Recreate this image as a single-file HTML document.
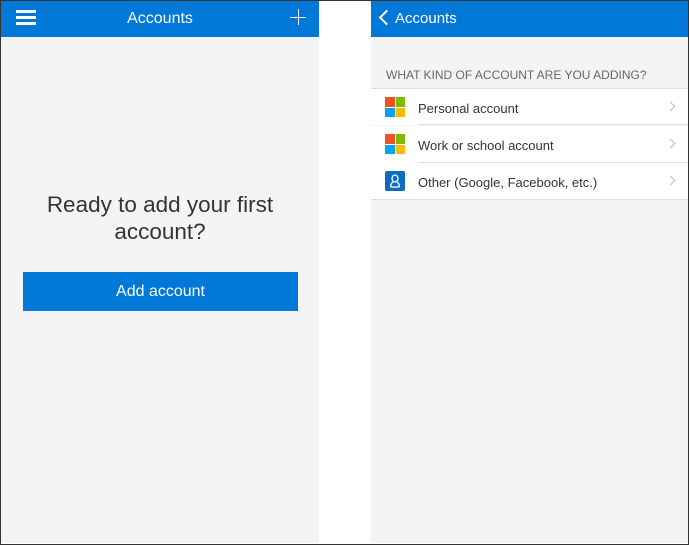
<!DOCTYPE html>
<html><head><style>
*{margin:0;padding:0;box-sizing:border-box}
body{width:689px;height:545px;background:#fff;font-family:"Liberation Sans",sans-serif;position:relative;overflow:hidden}
.frame{position:absolute;left:0;top:0;width:689px;height:545px;border:1px solid #333;}
.p{position:absolute;top:1px;height:542px;background:#f4f4f4}
.hd{position:absolute;left:0;top:0;right:0;height:36px;background:#0078d7;color:#fff}
.row{position:absolute;left:0;right:0;height:37px;background:#fff;font-size:13px;color:#333}
.row span{position:absolute;left:47px;top:12px}
.sep{position:absolute;left:47px;right:0;bottom:0;height:1px;background:#ddd}
.chev{position:absolute;right:14px;top:14px;width:7px;height:7px;border-right:1px solid #bbb;border-top:1px solid #bbb;transform:rotate(45deg)}
.ms{position:absolute;left:14px;top:8px;width:20px;height:20px}
.ms i{position:absolute;width:9.5px;height:9.5px}
</style></head><body>
<div class="p" style="left:1px;width:318px">
 <div class="hd">
  <div style="position:absolute;left:15px;top:9px;width:20px;height:2.5px;background:#fff;box-shadow:0 6px 0 #fff,0 12px 0 #fff"></div>
  <div style="position:absolute;left:0;right:0;top:9px;text-align:center;font-size:16px">Accounts</div>
  <div style="position:absolute;left:289px;top:16px;width:16px;height:1.3px;background:#fff"></div>
  <div style="position:absolute;left:296.5px;top:8px;width:1.3px;height:16px;background:#fff"></div>
 </div>
 <div style="position:absolute;left:0;right:0;top:190px;text-align:center;font-size:22.5px;line-height:27px;color:#333">Ready to add your first<br>account?</div>
 <div style="position:absolute;left:22px;top:271px;width:275px;height:39px;background:#0078d7;color:#fff;font-size:16px;text-align:center;line-height:39px">Add account</div>
</div>
<div class="p" style="left:371px;width:317px">
 <div class="hd">
  <div style="position:absolute;left:10px;top:11px;width:11px;height:11px;border-left:2.5px solid #fff;border-bottom:2.5px solid #fff;transform:rotate(45deg)"></div>
  <div style="position:absolute;left:24px;top:9px;font-size:15px">Accounts</div>
 </div>
 <div style="position:absolute;left:15px;top:67px;font-size:12px;color:#666">WHAT KIND OF ACCOUNT ARE YOU ADDING?</div>
 <div class="row" style="top:87px;border-top:1px solid #ddd"><div class="ms"><i style="left:0;top:0;background:#f25022"></i><i style="left:10.5px;top:0;background:#7fba00"></i><i style="left:0;top:10.5px;background:#00a4ef"></i><i style="left:10.5px;top:10.5px;background:#ffb900"></i></div><span>Personal account</span><div class="chev"></div><div class="sep"></div></div>
 <div class="row" style="top:125px"><div class="ms"><i style="left:0;top:0;background:#f25022"></i><i style="left:10.5px;top:0;background:#7fba00"></i><i style="left:0;top:10.5px;background:#00a4ef"></i><i style="left:10.5px;top:10.5px;background:#ffb900"></i></div><span>Work or school account</span><div class="chev"></div><div class="sep"></div></div>
 <div class="row" style="top:162px;height:37px;border-bottom:1px solid #ddd"><div class="ms" style="background:#0b6cc0;border-radius:2px"><svg width="20" height="20" viewBox="0 0 20 20"><ellipse cx="10" cy="7.5" rx="3" ry="3.5" fill="none" stroke="#fff" stroke-width="1.3"/><path d="M5.5 16 Q6 12 8 11 M14.5 16 Q14 12 12 11 M5.5 16 H14.5" fill="none" stroke="#fff" stroke-width="1.3"/></svg></div><span>Other (Google, Facebook, etc.)</span><div class="chev"></div></div>
</div>
<div class="frame"></div>
</body></html>
